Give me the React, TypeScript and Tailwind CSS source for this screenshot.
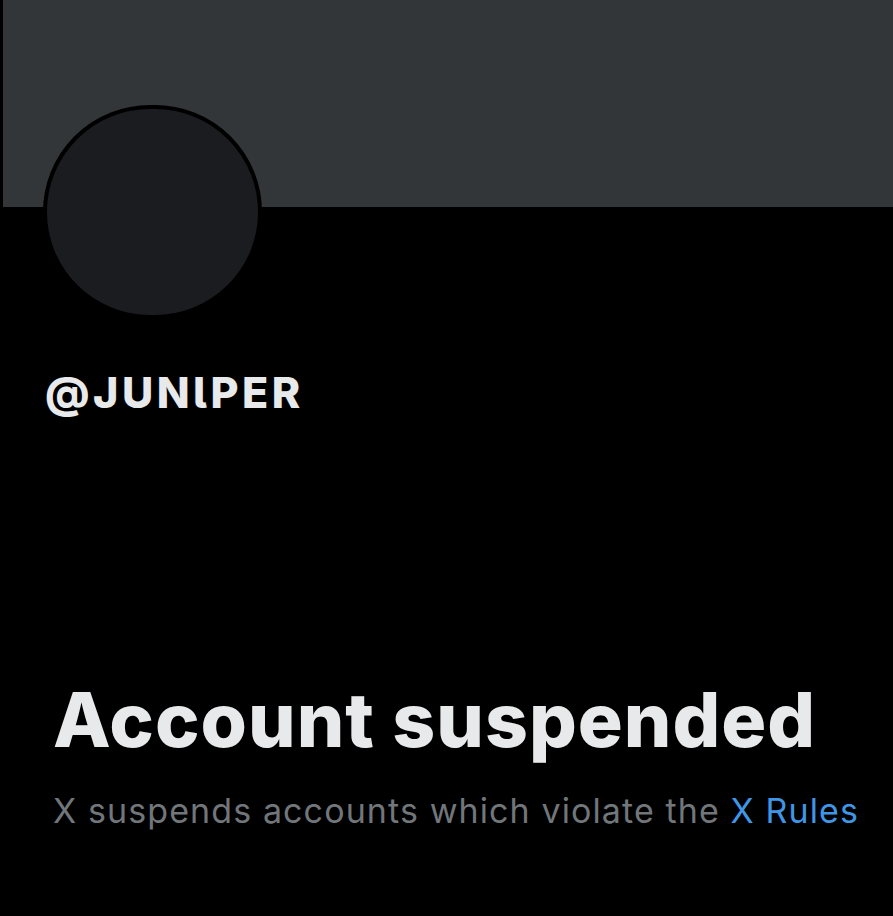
export default function App() {
  return (
    <div
      className="w-[893px] h-[916px] bg-black overflow-hidden flex flex-col"
      style={{ fontFamily: "Inter, 'Liberation Sans', sans-serif" }}
    >
      {/* Banner */}
      <div className="h-[207px] ml-[3px] bg-[#333639] shrink-0" />

      {/* Avatar */}
      <div className="ml-[43px] -mt-[102px] w-[219px] h-[214px] rounded-full bg-[#1a1c1f] border-[4px] border-black shrink-0" />

      {/* Handle */}
      <div className="ml-[45px] mt-[49px] text-[43px] leading-[48px] font-extrabold text-[#e7e9ea] tracking-[3.5px]">
        @JUN<span className="[font-feature-settings:'cv05']">l</span>PER
      </div>

      {/* Suspended message */}
      <div className="ml-[53px] mt-[264px] flex flex-col">
        <h1 className="text-[75px] leading-[80px] font-extrabold text-[#e7e9ea] tracking-[1px]">
          Account suspended
        </h1>
        <p className="mt-[31px] text-[34px] leading-[40px] text-[#71767b] tracking-[1.1px]">
          X suspends accounts which violate the{" "}
          <span className="text-[#4096e6]">X Rules</span>
        </p>
      </div>
    </div>
  );
}
